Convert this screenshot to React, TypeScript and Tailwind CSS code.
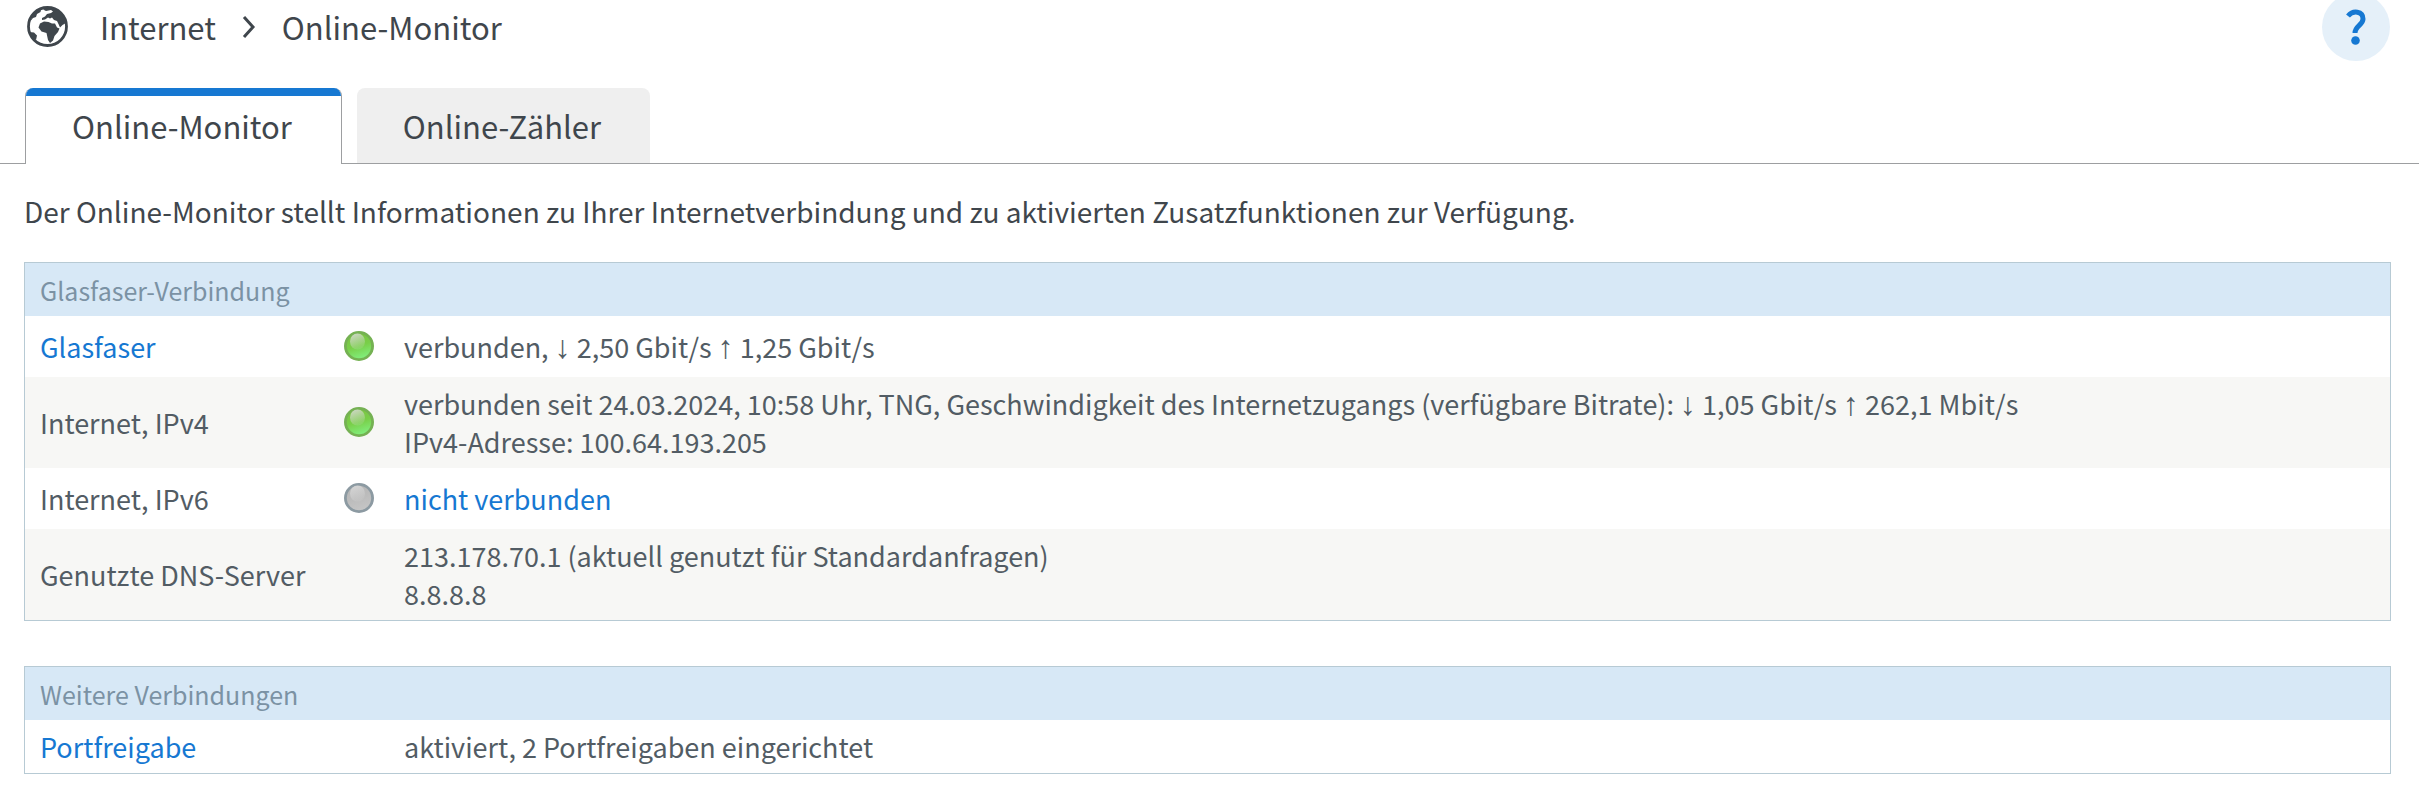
import type { ReactNode } from "react";

type Row = {
  label: string;
  link?: boolean;
  led?: "green" | "gray";
  value: ReactNode;
};

const linkClass = "text-[#1678d2] hover:underline";

const Arrow = ({ children }: { children: ReactNode }) => (
  <span className="font-['Liberation_Sans',sans-serif] text-[32px] leading-none">{children}</span>
);

const connectionRows: Row[] = [
  {
    label: "Glasfaser",
    link: true,
    led: "green",
    value: (
      <>
        verbunden, <Arrow>↓</Arrow> 2,50 Gbit/s <Arrow>↑</Arrow> 1,25 Gbit/s
      </>
    ),
  },
  {
    label: "Internet, IPv4",
    led: "green",
    value: (
      <>
        verbunden seit 24.03.2024, 10:58 Uhr, TNG, Geschwindigkeit des
        Internetzugangs (verfügbare Bitrate): <Arrow>↓</Arrow> 1,05 Gbit/s{" "}
        <Arrow>↑</Arrow> 262,1 Mbit/s
        <br />
        IPv4-Adresse: 100.64.193.205
      </>
    ),
  },
  {
    label: "Internet, IPv6",
    led: "gray",
    value: (
      <a href="#ipv6" className={linkClass}>
        nicht verbunden
      </a>
    ),
  },
  {
    label: "Genutzte DNS-Server",
    value: (
      <>
        213.178.70.1 (aktuell genutzt für Standardanfragen)
        <br />
        8.8.8.8
      </>
    ),
  },
];

const otherRows: Row[] = [
  {
    label: "Portfreigabe",
    link: true,
    value: "aktiviert, 2 Portfreigaben eingerichtet",
  },
];

const Globe = () => (
  <svg viewBox="0 0 41 41" className="size-[41px] shrink-0" aria-hidden="true">
    <circle cx="20.5" cy="20.5" r="19" fill="none" stroke="#3f464c" strokeWidth="2.8" />
    <path
      fill="#3f464c"
      d="M21 2 L16 3.5 L19 5 L24 4 L26 5.5 L24 7 L20 8 L18 10.5 L15 12 L15 14 L18 13.5 L21 11.5 L23 12.5 L25 11.5 L27 14 L30 15 L31.5 18 L33 21.5 L35.5 19 L39 17 C38 9 31 2 21 2Z"
    />
    <path
      fill="#3f464c"
      d="M13 17.5 L17 15.5 L21.5 16 L25 17.5 L28 17.5 L30 21.5 L32.5 22.5 L31 26 L27.5 30 L26 34.5 L23 37 L21 34 L19.5 27 L14.5 25.5 L11.5 21.5Z"
    />
    <path fill="#3f464c" d="M14 3.5 L13.5 6 L10 8 L9 11 L6 12 L3.5 15 L6 8Z M2.5 26 L7 26.5 L10 29.5 L9 34 L5 31.5Z" />
  </svg>
);

const Led = ({ color }: { color: "green" | "gray" }) => {
  const green = color === "green";
  return (
    <svg viewBox="0 0 30 30" className="size-[30px]" role="img" aria-label={green ? "aktiv" : "inaktiv"}>
      <defs>
        <linearGradient id={`led-${color}`} x1="0.3" y1="0" x2="0.6" y2="1">
          <stop offset="0" stopColor={green ? "#7cc142" : "#b5b5b5"} />
          <stop offset="0.5" stopColor={green ? "#79cf49" : "#bcbcbc"} />
          <stop offset="1" stopColor={green ? "#82f181" : "#c6c6c6"} />
        </linearGradient>
        <linearGradient id={`shine-${color}`} x1="0" y1="0" x2="0.4" y2="1">
          <stop offset="0" stopColor="#dcdcdc" stopOpacity="0.9" />
          <stop offset="1" stopColor="#dcdcdc" stopOpacity="0.15" />
        </linearGradient>
      </defs>
      <circle cx="15" cy="15" r="13.6" fill={`url(#led-${color})`} stroke={green ? "#75b153" : "#8c9aa2"} strokeWidth="2.8" />
      <ellipse cx="13.5" cy="10.5" rx="7.5" ry="8" fill={`url(#shine-${color})`} />
    </svg>
  );
};

const StatusTable = ({ title, rows }: { title: string; rows: Row[] }) => (
  <table className="w-full border-separate border-spacing-0 border border-[#b7cad4] text-left text-[27px] leading-[38px] text-[#525c64]">
    <thead>
      <tr className="bg-[#d7e8f6]">
        <th colSpan={3} className="px-[15px] pt-2 pb-[7px] text-[25px] font-normal text-[#7b92a4]">
          {title}
        </th>
      </tr>
    </thead>
    <tbody>
      {rows.map((row) => (
        <tr key={row.label} className="even:bg-[#f7f7f5]">
          <td className="w-[303px] pt-2 pb-[7px] pl-[15px]">
            {row.link ? (
              <a href="#details" className={linkClass}>
                {row.label}
              </a>
            ) : (
              row.label
            )}
          </td>
          <td className={row.led ? "w-[76px] pt-[15px] pb-4 pl-4" : "w-[76px]"}>
            {row.led && <Led color={row.led} />}
          </td>
          <td className="pt-2 pr-[15px] pb-[7px]">{row.value}</td>
        </tr>
      ))}
    </tbody>
  </table>
);

export default function App() {
  return (
    <div className="bg-white font-['Noto_Sans_CJK_SC',sans-serif] text-[#3f464c]">
      <header className="flex h-[61px] items-start justify-between pr-[29px] pl-[27px]">
        <nav className="flex items-start pt-1.5 text-[31px] leading-[42px]">
          <Globe />
          <span className="ml-8">Internet</span>
          <svg viewBox="0 0 14 22" className="mx-[26px] mt-2.5 h-[22px] w-3.5" fill="none" stroke="#3f464c" strokeWidth="3" aria-hidden="true">
            <path d="M2 1 L11 11 L2 21" />
          </svg>
          <span>Online-Monitor</span>
        </nav>
        <button type="button" aria-label="Hilfe" className="-mt-[7px] flex size-[68px] items-center justify-center rounded-full bg-[#e5f0f9]">
          <svg viewBox="0 0 20 36" className="h-9 w-5" aria-hidden="true">
            <path d="M2 7 C7 1 17 2 17 10 C17 16 9 17 9 24" fill="none" stroke="#1678d2" strokeWidth="5" />
            <circle cx="9.5" cy="31.5" r="4.3" fill="#1678d2" />
          </svg>
        </button>
      </header>

      <div role="tablist" className="mt-[27px] flex border-b border-[#9d9fa1] pl-[25px] text-[31px] leading-[44px]">
        <button
          type="button"
          role="tab"
          aria-selected="true"
          className="-mb-px flex flex-col overflow-hidden rounded-t-lg border-x border-[#9d9fa1] bg-white"
        >
          <span className="h-2 w-full bg-[#1678d2]" />
          <span className="pt-2 pr-[49px] pb-4 pl-[46px]">Online-Monitor</span>
        </button>
        <button type="button" role="tab" aria-selected="false" className="ml-[15px] rounded-t-lg bg-[#efefef] pr-[49px] pl-[46px]">
          Online-Zähler
        </button>
      </div>

      <main className="pt-7 pr-7 pb-6 pl-6">
        <p className="mb-8 text-[28px] leading-[38px]">
          Der Online-Monitor stellt Informationen zu Ihrer Internetverbindung
          und zu aktivierten Zusatzfunktionen zur Verfügung.
        </p>
        <div className="flex flex-col gap-[45px]">
          <StatusTable title="Glasfaser-Verbindung" rows={connectionRows} />
          <StatusTable title="Weitere Verbindungen" rows={otherRows} />
        </div>
      </main>
    </div>
  );
}
